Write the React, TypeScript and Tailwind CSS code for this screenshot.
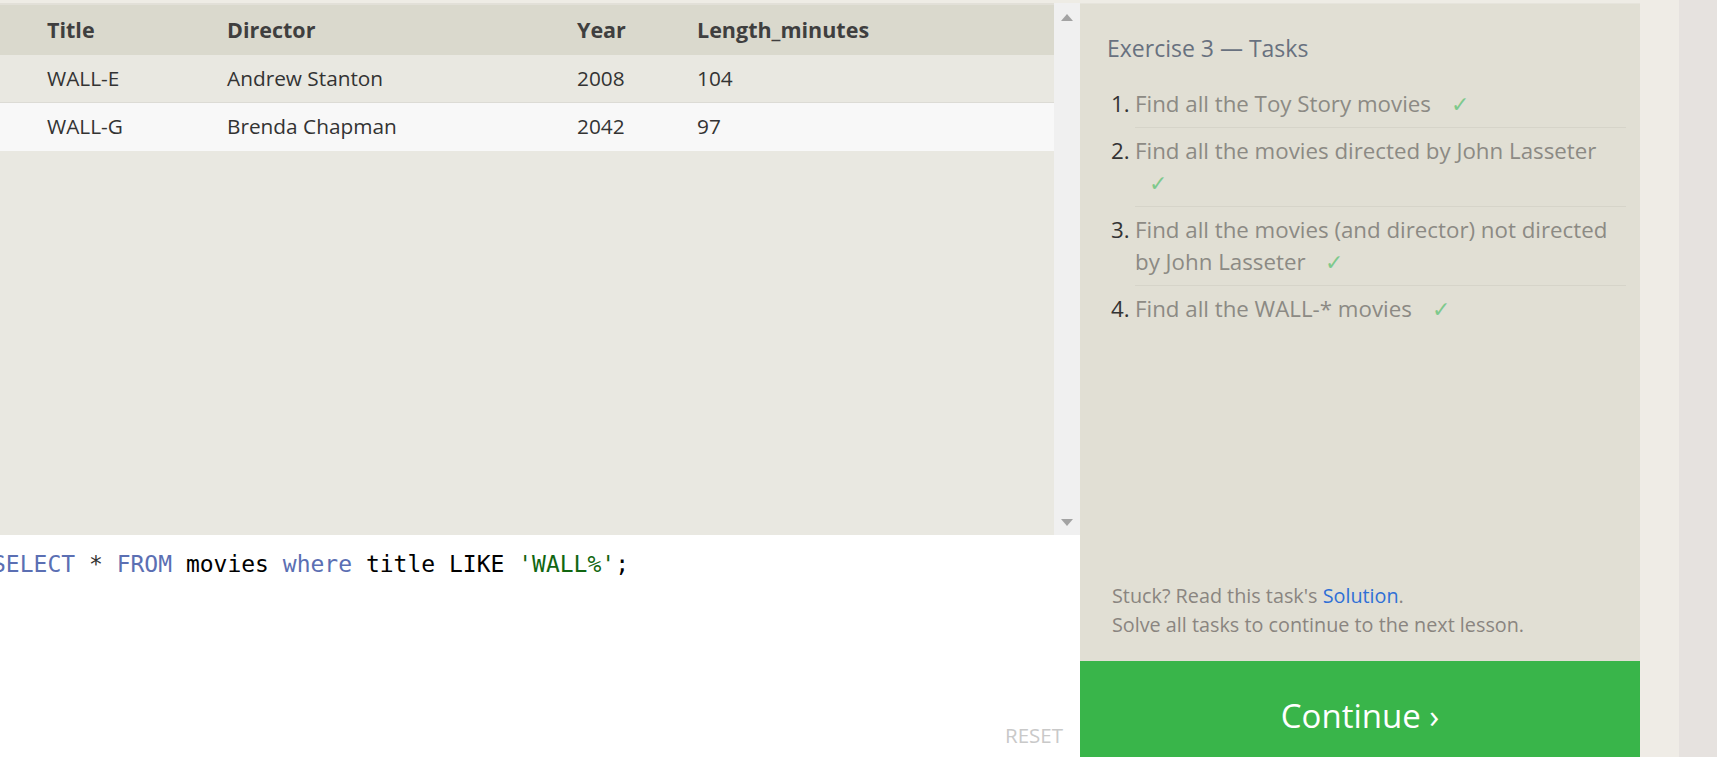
import React from "react";

const rows = [
  { title: "WALL-E", director: "Andrew Stanton", year: "2008", len: "104", bg: "bg-[#e9e8e1]" },
  { title: "WALL-G", director: "Brenda Chapman", year: "2042", len: "97", bg: "bg-[#f8f8f8]" },
];

const tasks: { text: string }[] = [
  { text: "Find all the Toy Story movies" },
  { text: "Find all the movies directed by John Lasseter" },
  { text: "Find all the movies (and director) not directed by John Lasseter" },
  { text: "Find all the WALL-* movies" },
];

export default function App() {
  const sans = { fontFamily: '"Open Sans", "Noto Sans", sans-serif' };
  return (
    <div className="flex h-[757px] w-[1717px] overflow-hidden bg-[#e6e2df]" style={sans}>
      <div className="flex w-[1640px] flex-col">
        <div className="h-[3px] bg-[#eeece5]" />
        <div className="flex min-h-0 flex-1">
          {/* left column */}
          <div className="flex w-[1080px] flex-col">
            <div className="flex h-[532px]">
              <div className="flex w-[1054px] flex-col bg-[#e9e8e1] border-t-2 border-[#e2e0d8]">
                <div className="flex h-[50px] items-center bg-[#dad9cd] text-[21.5px] font-bold text-[#3f3f3f]">
                  <div className="w-[227px] pl-[47px]">Title</div>
                  <div className="w-[350px]">Director</div>
                  <div className="w-[120px]">Year</div>
                  <div>Length_minutes</div>
                </div>
                {rows.map((r, i) => (
                  <div
                    key={r.title}
                    className={`flex h-[48px] items-center text-[20.8px] text-[#333] ${r.bg} ${i === 0 ? "border-b border-[#dcdbd5]" : ""}`}
                  >
                    <div className="w-[227px] pl-[47px]">{r.title}</div>
                    <div className="w-[350px]">{r.director}</div>
                    <div className="w-[120px]">{r.year}</div>
                    <div>{r.len}</div>
                  </div>
                ))}
              </div>
              <div className="flex w-[26px] flex-col items-center justify-between bg-[#f0f0f0] pb-[9px] pt-[11px]">
                <svg width="12" height="7" viewBox="0 0 12 7">
                  <polygon points="6,0 12,7 0,7" fill="#a3a3a3" />
                </svg>
                <svg width="12" height="7" viewBox="0 0 12 7">
                  <polygon points="0,0 12,0 6,7" fill="#a3a3a3" />
                </svg>
              </div>
            </div>
            <div className="relative flex-1 overflow-hidden bg-white">
              <div
                className="ml-[-8px] mt-[14px] whitespace-pre text-[23px] leading-[30px] text-black"
                style={{ fontFamily: '"DejaVu Sans Mono", monospace' }}
              >
                <span className="text-[#5b6fb3]">SELECT</span>
                <span className="text-[#333]"> * </span>
                <span className="text-[#5b6fb3]">FROM</span>
                <span> movies </span>
                <span className="text-[#5b6fb3]">where</span>
                <span> title LIKE </span>
                <span className="text-[#116611]">'WALL%'</span>
                <span>;</span>
              </div>
              <div className="absolute bottom-[6px] right-[17px] text-[20.5px] text-[#c9c9c9]">RESET</div>
            </div>
          </div>

          {/* right panel */}
          <div className="flex w-[560px] flex-col bg-[#e1dfd4] border-t border-[#e6e4dc]">
            <div className="pl-[27px] pt-[29px] text-[23px] leading-[30px] text-[#68717f]">Exercise 3 — Tasks</div>
            <ol className="mt-[18px] pl-[31px] pr-[14px]">
              {tasks.map((t, i) => (
                <li key={i} className="flex text-[22.3px] leading-[32px]">
                  <span className="w-[24px] shrink-0 py-[7px] text-[#333]">{i + 1}.</span>
                  <div
                    className={`flex-1 py-[7px] text-[#8c8a84] ${i < tasks.length - 1 ? "border-b border-[#d6d4c9]" : ""}`}
                  >
                    {t.text} <span className="ml-[14px] text-[#7ec98c]">✓</span>
                  </div>
                </li>
              ))}
            </ol>
            <div className="flex-1" />
            <div className="pb-[22px] pl-[32px] text-[19.8px] leading-[29px] text-[#8a8580]">
              <div>
                Stuck? Read this task's <span className="text-[#2f6fd6]">Solution</span>.
              </div>
              <div>Solve all tasks to continue to the next lesson.</div>
            </div>
            <div className="flex h-[96px] items-center justify-center bg-[#39b54a] pt-[14px] text-[33px] text-white">
              Continue ›
            </div>
          </div>
        </div>
      </div>
      <div className="w-[39px] bg-[#efece6]" />
      <div className="flex-1 bg-[#e6e2df]" />
    </div>
  );
}
